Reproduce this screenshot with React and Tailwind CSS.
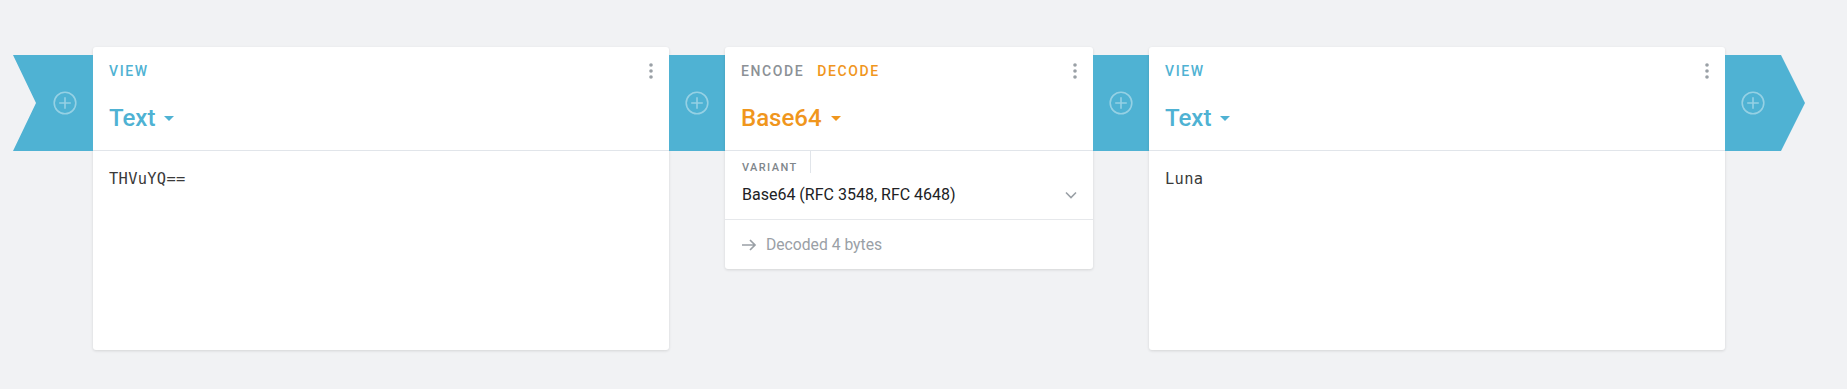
const BLUE = "#4fb2d3";

function PlusIcon() {
  return (
    <svg width="24" height="24" viewBox="0 0 24 24" fill="none" stroke="white" strokeOpacity="0.4" strokeWidth="1.6">
      <circle cx="12" cy="12" r="10.8" />
      <path d="M12 6.2v11.6M6.2 12h11.6" />
    </svg>
  );
}

function Kebab() {
  return (
    <svg width="4" height="16" viewBox="0 0 4 16" className="shrink-0">
      <circle cx="2" cy="2" r="1.8" fill="#9aa0a6" />
      <circle cx="2" cy="8" r="1.8" fill="#9aa0a6" />
      <circle cx="2" cy="14" r="1.8" fill="#9aa0a6" />
    </svg>
  );
}

function Caret({ color }) {
  return (
    <svg width="10" height="5" viewBox="0 0 10 5" className="ml-[9px] mt-[1px]">
      <polygon points="0,0 10,0 5,5" fill={color} />
    </svg>
  );
}

function Header({ labels, title, color }) {
  return (
    <div className="flex justify-between pl-4 pr-4 pt-4 pb-4 border-b border-[#e1e5ea]">
      <div>
        <div className="flex gap-[13px] h-4 text-[14px] leading-4 font-medium tracking-[1.6px]">
          {labels.map((l) => (
            <span key={l.text} style={{ color: l.color }}>
              {l.text}
            </span>
          ))}
        </div>
        <div className="mt-[23px] flex items-center h-8 text-[24px] leading-8 font-medium" style={{ color }}>
          {title}
          <Caret color={color} />
        </div>
      </div>
      <Kebab />
    </div>
  );
}

function TextCard({ value }) {
  return (
    <div className="w-[576px] shrink-0 bg-white rounded-[3px] shadow-[0_1px_3px_rgba(0,0,0,0.12)]">
      <Header labels={[{ text: "VIEW", color: BLUE }]} title="Text" color={BLUE} />
      <div className="h-[199px] pl-4 pt-[18px] text-[15.4px] leading-5 tracking-[0.3px] text-[#3a3a3a] font-['DejaVu_Sans_Mono',monospace]">
        {value}
      </div>
    </div>
  );
}

function Gap() {
  return (
    <div className="w-[56px] h-[96px] mt-2 shrink-0 flex items-center justify-center" style={{ background: BLUE }}>
      <PlusIcon />
    </div>
  );
}

export default function App() {
  return (
    <div className="min-h-screen bg-[#f1f2f4] font-['Roboto',sans-serif]">
      <div className="flex items-start pl-[13px] pt-[47px]">
        {/* left chevron */}
        <div
          className="w-[80px] h-[96px] mt-2 shrink-0 flex items-center justify-center pl-[23px] [clip-path:polygon(0_0,100%_0,100%_100%,0_100%,23px_50%)]"
          style={{ background: BLUE }}
        >
          <PlusIcon />
        </div>

        <TextCard value="THVuYQ==" />
        <Gap />

        {/* base64 card */}
        <div className="w-[368px] shrink-0 bg-white rounded-[3px] shadow-[0_1px_3px_rgba(0,0,0,0.12)]">
          <Header
            labels={[
              { text: "ENCODE", color: "#8c9196" },
              { text: "DECODE", color: "#f0961d" },
            ]}
            title="Base64"
            color="#f0961d"
          />
          <div className="pl-[17px] pr-4 pb-3 border-b border-[#e6e8eb]">
            <div className="w-fit h-[22px] pt-[9px] pr-[12px] border-r border-[#e1e5ea] text-[11px] leading-4 font-medium tracking-[1.4px] text-[#80868b]">
              VARIANT
            </div>
            <div className="mt-[10px] flex items-center justify-between h-6">
              <span className="text-[16px] leading-6 text-[#202124]">Base64 (RFC 3548, RFC 4648)</span>
              <svg width="12" height="8" viewBox="0 0 12 8">
                <path d="M1 1.5l5 5 5-5" fill="none" stroke="#9aa0a6" strokeWidth="1.6" />
              </svg>
            </div>
          </div>
          <div className="pl-[17px] pt-[15px] pb-[14px] flex items-center text-[15.7px] leading-5 text-[#9aa0a6]">
            <svg width="15" height="12" viewBox="0 0 15 12" className="mr-[9px]">
              <path d="M0 6h13M8 1l5 5-5 5" fill="none" stroke="#9aa0a6" strokeWidth="1.7" />
            </svg>
            Decoded 4 bytes
          </div>
        </div>

        <Gap />
        <TextCard value="Luna" />

        {/* right arrow */}
        <div
          className="w-[80px] h-[96px] mt-2 shrink-0 flex items-center justify-center pr-[24px] [clip-path:polygon(0_0,56px_0,100%_50%,56px_100%,0_100%)]"
          style={{ background: BLUE }}
        >
          <PlusIcon />
        </div>
      </div>
    </div>
  );
}
